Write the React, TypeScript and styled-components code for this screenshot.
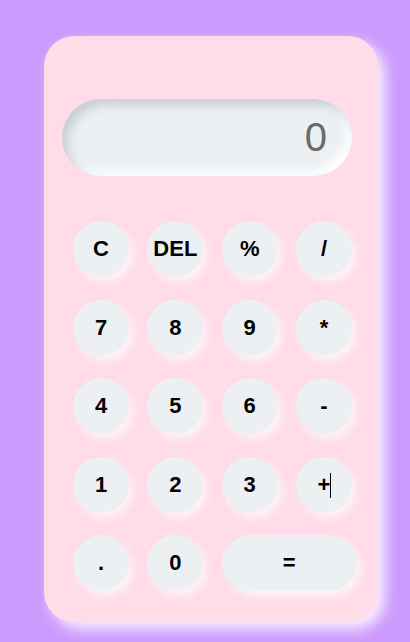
import React from "react";
import styled, { createGlobalStyle } from "styled-components";

const Global = createGlobalStyle`
  html, body { margin: 0; padding: 0; }
  body {
    background: #cc9bfd;
    font-family: "Liberation Sans", Arial, sans-serif;
    width: 410px;
    height: 642px;
    overflow: hidden;
  }
`;

const Page = styled.div`
  padding: 36px 0 0 44px;
`;

const Card = styled.div`
  width: 334px;
  height: 586px;
  box-sizing: border-box;
  background: #ffdce7;
  border-radius: 30px;
  padding: 63px 26px 30px 18px;
  box-shadow: 7px 7px 14px rgba(255, 255, 255, 0.85);
  display: flex;
  flex-direction: column;
`;

const Display = styled.div`
  height: 77px;
  border-radius: 39px;
  background: #ecf0f3;
  box-shadow: inset 6px 6px 10px rgba(170, 180, 190, 0.55),
    inset -6px -6px 10px rgba(255, 255, 255, 0.9);
  display: flex;
  align-items: center;
  justify-content: flex-end;
  padding-right: 25px;
  font-size: 40px;
  color: #6a6a6a;
  font-family: "Liberation Sans", Arial, sans-serif;
`;

const Keys = styled.div`
  margin: 45px 0 0 11px;
  display: grid;
  grid-template-columns: repeat(4, 56px);
  grid-auto-rows: 56px;
  column-gap: 18.33px;
  row-gap: 22.5px;
`;

const Key = styled.button<{ $wide?: boolean }>`
  position: relative;
  border: none;
  padding: 0;
  margin: 0;
  width: ${(p) => (p.$wide ? "135px" : "56px")};
  height: 56px;
  grid-column: ${(p) => (p.$wide ? "span 2" : "auto")};
  border-radius: 28px;
  background: #ecf0f3;
  box-shadow: 4px 5px 8px rgba(255, 255, 255, 0.75),
    1px 2px 5px rgba(215, 185, 195, 0.15);
  font-family: "Liberation Sans", Arial, sans-serif;
  font-weight: 700;
  font-size: 22px;
  color: #000;
  display: flex;
  align-items: center;
  justify-content: center;
`;

const Caret = styled.span`
  position: absolute;
  left: 34px;
  top: 16px;
  width: 1.5px;
  height: 25px;
  background: #000;
`;

const keys: { label: string; wide?: boolean; caret?: boolean }[] = [
  { label: "C" },
  { label: "DEL" },
  { label: "%" },
  { label: "/" },
  { label: "7" },
  { label: "8" },
  { label: "9" },
  { label: "*" },
  { label: "4" },
  { label: "5" },
  { label: "6" },
  { label: "-" },
  { label: "1" },
  { label: "2" },
  { label: "3" },
  { label: "+", caret: true },
  { label: "." },
  { label: "0" },
  { label: "=", wide: true },
];

export default function App() {
  return (
    <>
      <Global />
      <Page>
        <Card>
          <Display>0</Display>
          <Keys>
            {keys.map((k) => (
              <Key key={k.label} $wide={k.wide}>
                {k.label}
                {k.caret && <Caret />}
              </Key>
            ))}
          </Keys>
        </Card>
      </Page>
    </>
  );
}
